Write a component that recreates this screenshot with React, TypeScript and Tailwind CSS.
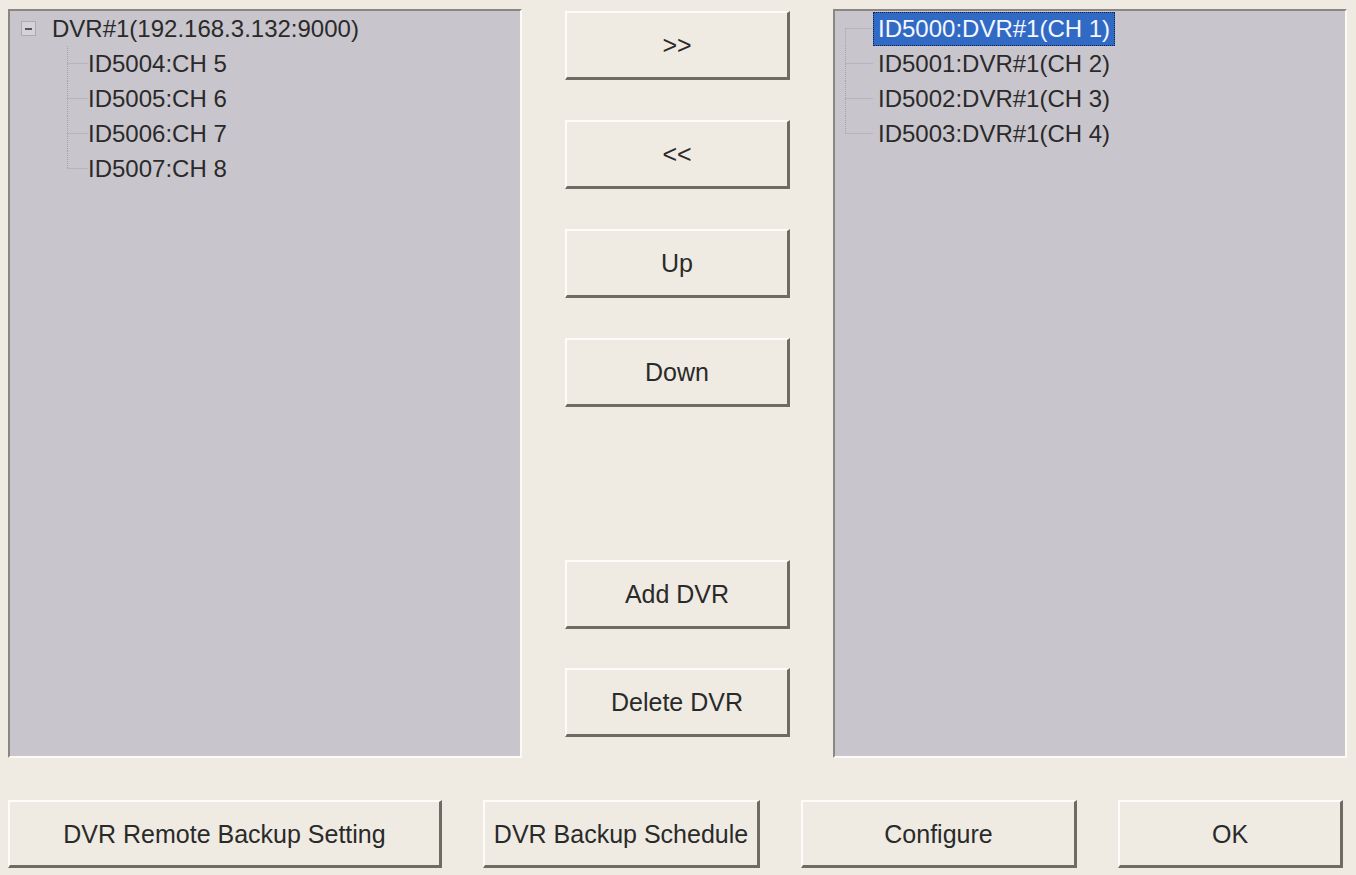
import React from "react";

const leftItems = ["ID5004:CH 5", "ID5005:CH 6", "ID5006:CH 7", "ID5007:CH 8"];
const rightItems = [
  "ID5000:DVR#1(CH 1)",
  "ID5001:DVR#1(CH 2)",
  "ID5002:DVR#1(CH 3)",
  "ID5003:DVR#1(CH 4)",
];

// Dotted tree connector for one row: vertical part depends on position in the list.
function Connector({ pos, width }: { pos: "first" | "mid" | "last" | "only"; width: number }) {
  const y1 = pos === "first" || pos === "only" ? 17.5 : 0;
  const y2 = pos === "last" || pos === "only" ? 17.5 : 35;
  return (
    <svg width={width} height={35} className="shrink-0">
      <line x1={7.5} y1={y1} x2={7.5} y2={y2} stroke="#a6a2a8" strokeWidth={1} strokeDasharray="1 1" />
      <line x1={7.5} y1={17.5} x2={width} y2={17.5} stroke="#a6a2a8" strokeWidth={1} strokeDasharray="1 1" />
    </svg>
  );
}

function Button({ label, className = "" }: { label: string; className?: string }) {
  return (
    <button
      className={
        "flex items-center justify-center pt-[2px] bg-[#efebe2] text-[25px] text-[#2a2a2a] border-t-2 border-l-2 border-b-[3px] border-r-[3px] border-t-[#fdfcf9] border-l-[#fdfcf9] border-b-[#6f6b63] border-r-[#6f6b63] " +
        className
      }
    >
      {label}
    </button>
  );
}

function Panel({ children }: { children: React.ReactNode }) {
  return (
    <div className="w-[514px] h-full bg-[#c9c5cd] border-2 border-t-[#8a8782] border-l-[#8a8782] border-b-[#fbfaf6] border-r-[#fbfaf6]">
      {children}
    </div>
  );
}

export default function App() {
  return (
    <div className="w-[1356px] h-[875px] bg-[#efebe3] flex flex-col pl-2 pr-[9px] pt-[9px] font-['Liberation_Sans',Arial,sans-serif] text-[24px] text-[#2a2a2a]">
      <div className="flex h-[749px] gap-[43px]">
        {/* available channels */}
        <Panel>
          <div className="flex items-center h-[35px] pl-[11px]">
            <span className="w-[15px] h-[15px] border border-[#aeabad] bg-[#d6d3d8] flex items-center justify-center">
              <span className="block w-[7px] h-[2px] bg-[#555]" />
            </span>
            <span className="ml-[16px] whitespace-nowrap">DVR#1(192.168.3.132:9000)</span>
          </div>
          <div className="pl-[50px]">
            {leftItems.map((t, i) => (
              <div key={t} className="flex items-center h-[35px]">
                <Connector pos={i === leftItems.length - 1 ? "last" : "mid"} width={28} />
                <span className="whitespace-nowrap">{t}</span>
              </div>
            ))}
          </div>
        </Panel>

        {/* middle buttons */}
        <div className="w-[225px] flex flex-col pt-[2px] pb-[21px]">
          <div className="flex flex-col gap-[40px]">
            <Button label=">>" className="h-[69px]" />
            <Button label="<<" className="h-[69px]" />
            <Button label="Up" className="h-[69px]" />
            <Button label="Down" className="h-[69px]" />
          </div>
          <div className="mt-auto flex flex-col gap-[39px]">
            <Button label="Add DVR" className="h-[69px]" />
            <Button label="Delete DVR" className="h-[69px]" />
          </div>
        </div>

        {/* selected channels */}
        <Panel>
          <div className="pl-[3px]">
            {rightItems.map((t, i) => (
              <div key={t} className="flex items-center h-[35px]">
                <Connector
                  pos={i === 0 ? "first" : i === rightItems.length - 1 ? "last" : "mid"}
                  width={35}
                />
                {i === 0 ? (
                  <span className="h-[34px] flex items-center px-[4px] bg-[#316ac5] text-[#f4f7ff] border border-dotted border-[#0c1f4d] whitespace-nowrap">
                    {t}
                  </span>
                ) : (
                  <span className="pl-[5px] whitespace-nowrap">{t}</span>
                )}
              </div>
            ))}
          </div>
        </Panel>
      </div>

      <div className="mt-[42px] flex gap-[41px] h-[68px]">
        <Button label="DVR Remote Backup Setting" className="w-[434px]" />
        <Button label="DVR Backup Schedule" className="w-[277px]" />
        <Button label="Configure" className="w-[276px]" />
        <Button label="OK" className="w-[225px]" />
      </div>
    </div>
  );
}
